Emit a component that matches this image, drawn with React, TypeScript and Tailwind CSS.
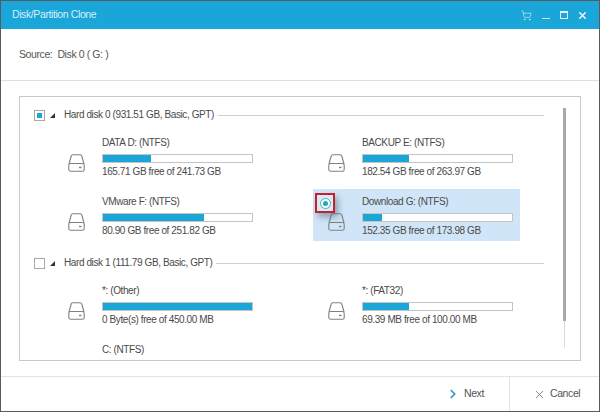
import { ChevronRight, ShoppingCart, X } from "lucide-react";

type Partition = {
  name: string;
  free: string;
  used: number;
  selected?: boolean;
};

const disks: { title: string; checked: boolean; partitions: Partition[] }[] = [
  {
    title: "Hard disk 0 (931.51 GB, Basic, GPT)",
    checked: true,
    partitions: [
      { name: "DATA D: (NTFS)", free: "165.71 GB free of 241.73 GB", used: 32 },
      { name: "BACKUP E: (NTFS)", free: "182.54 GB free of 263.97 GB", used: 31 },
      { name: "VMware F: (NTFS)", free: "80.90 GB free of 251.82 GB", used: 68 },
      { name: "Download G: (NTFS)", free: "152.35 GB free of 173.98 GB", used: 13, selected: true },
    ],
  },
  {
    title: "Hard disk 1 (111.79 GB, Basic, GPT)",
    checked: false,
    partitions: [
      { name: "*: (Other)", free: "0 Byte(s) free of 450.00 MB", used: 100 },
      { name: "*: (FAT32)", free: "69.39 MB free of 100.00 MB", used: 31 },
      { name: "C: (NTFS)", free: "", used: 0 },
    ],
  },
];

function DriveIcon() {
  return (
    <svg width="17" height="18" viewBox="0 0 17 18" fill="none" stroke="#808080" strokeWidth="1.1">
      <path d="M1 10 L3.2 2 Q3.5 0.8 4.8 0.8 H12.2 Q13.5 0.8 13.8 2 L16 10" />
      <rect x="0.8" y="9.5" width="15.4" height="7.7" rx="1.8" />
      <path d="M11 13.5 H13.5" strokeWidth="1.4" />
    </svg>
  );
}

function PartitionCard({ partition }: { partition: Partition }) {
  return (
    <div className={`relative flex h-[52px] pt-[6px] ${partition.selected ? "bg-[#d0e6f8]" : ""}`}>
      {partition.selected && (
        <div className="absolute left-[2px] top-[4px] flex size-5 items-center justify-center border-2 border-[#c8202c] bg-[#d9ebf5] shadow-[3px_4px_6px_rgba(70,90,110,0.5)]">
          <div className="flex size-[11px] items-center justify-center rounded-full border border-[#3cb4c8] bg-white">
            <div className="size-[5px] rounded-full bg-[#22a5bd]" />
          </div>
        </div>
      )}
      <div className="ml-[15px] mt-[18px] w-[17px] shrink-0">
        <DriveIcon />
      </div>
      <div className="ml-[17px] flex w-[151px] flex-col">
        <div className="h-[14px] leading-[14px]">{partition.name}</div>
        <div className="mt-[4px] h-[9px] border border-[#c4c4c4] bg-white">
          <div className="h-full bg-[#1ba6d8]" style={{ width: `${partition.used}%` }} />
        </div>
        <div className="mt-[2px] h-[14px] whitespace-nowrap leading-[14px]">{partition.free}</div>
      </div>
    </div>
  );
}

function DiskGroup({ disk }: { disk: (typeof disks)[number] }) {
  return (
    <div className="mb-[15px]">
      <div className="flex h-[14px] items-center">
        <div className="flex size-[11px] items-center justify-center border border-[#a8a8a8] bg-white">
          {disk.checked && <div className="size-[5px] bg-[#1ba6d8]" />}
        </div>
        <div className="ml-[5px] size-0 border-b-[5px] border-l-[5px] border-b-[#333] border-l-transparent" />
        <div className="ml-[9px] whitespace-nowrap leading-[14px]">{disk.title}</div>
        <div className="ml-[4px] h-px flex-1 bg-[#cfcfcf]" />
      </div>
      <div className="ml-[19px] mt-2 grid grid-cols-[207px_207px] gap-x-[53px] gap-y-[7px]">
        {disk.partitions.map((partition) => (
          <PartitionCard key={partition.name} partition={partition} />
        ))}
      </div>
    </div>
  );
}

export default function App() {
  return (
    <div className="flex h-[412px] w-[600px] flex-col overflow-hidden border border-[#555b60] bg-white font-['Liberation_Sans',sans-serif] text-[10px] tracking-[-0.4px] text-[#4a4a4a]">
      <div className="flex h-[28px] shrink-0 items-center justify-between bg-[#1ba6d9] pl-[11px] pr-[11px] text-[#d5eef8]">
        <span className="text-[10.5px]">Disk/Partition Clone</span>
        <div className="flex items-center">
          <ShoppingCart className="size-[11px] text-[#bfe6f4]" strokeWidth={1.6} />
          <div className="ml-[10px] mt-[6px] h-px w-[8px] bg-[#bfe6f4]" />
          <div className="ml-[10px] h-[8px] w-[8px] border border-t-2 border-[#e3f4fb]" />
          <X className="ml-[9px] size-[11px] text-white" strokeWidth={3} />
        </div>
      </div>

      <div className="flex h-[52px] shrink-0 items-center border-b border-[#e0e0e0] pl-[18px] text-[10.5px] text-[#555]">
        Source:&nbsp;&nbsp;Disk 0 ( G: )
      </div>

      <div className="mx-[18px] mt-[15px] flex h-[265px] shrink-0 overflow-hidden border border-[#c9c9c9] pl-[14px] pt-[11px]">
        <div className="w-[510px] shrink-0">
          {disks.map((disk) => (
            <DiskGroup key={disk.title} disk={disk} />
          ))}
        </div>
        <div className="ml-[18px] flex w-[5px] flex-col items-center">
          <div className="h-[213px] w-[3px] bg-[#a9a9a9]" />
          <div className="h-[27px] w-px bg-[#dcdcdc]" />
        </div>
      </div>

      <div className="mt-[15px] flex flex-1 border-t border-[#e3e3e3] text-[#555]">
        <div className="flex flex-1 items-center justify-end pr-[25px]">
          <ChevronRight className="mr-[4px] size-[14px] text-[#1f9fbf]" strokeWidth={3} />
          <span className="text-[10.5px]">Next</span>
        </div>
        <div className="flex w-[90px] items-center border-l border-[#e3e3e3] pl-[23px]">
          <X className="mr-[4px] size-[13px] text-[#777]" strokeWidth={1.6} />
          <span className="text-[10.5px]">Cancel</span>
        </div>
      </div>
    </div>
  );
}
